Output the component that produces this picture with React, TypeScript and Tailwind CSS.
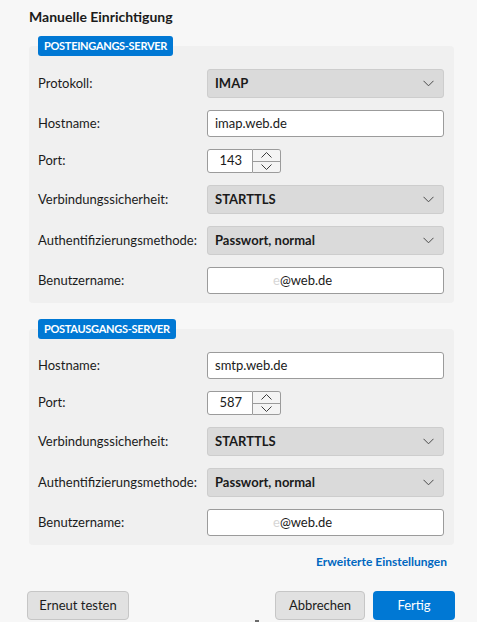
import React from "react";

const font = "font-['Lato','Open_Sans',sans-serif]";

function Chevron() {
  return (
    <svg width="11" height="7" viewBox="0 0 11 7" fill="none">
      <path d="M0.5 0.8 L5.5 5.8 L10.5 0.8" stroke="#4a4a4a" strokeWidth="1" />
    </svg>
  );
}

function Select({ value }: { value: string }) {
  return (
    <div className="h-[29px] w-[237px] flex items-center justify-between pl-[7px] pr-[9px] bg-[#dadada] border border-[#cdcdcd] rounded-[3px] text-[13px] font-bold text-[#1a1a1a]">
      <span>{value}</span>
      <Chevron />
    </div>
  );
}

function TextInput({ children }: { children: React.ReactNode }) {
  return (
    <div className="h-[27px] w-[237px] flex items-center pl-[7px] bg-white border border-[#9b9b9b] rounded-[3px] text-[13px] text-[#1a1a1a]">
      {children}
    </div>
  );
}

function Spinner({ value }: { value: string }) {
  return (
    <div className="flex h-[24px]">
      <div className="w-[46px] h-full flex items-center justify-end pr-[10px] bg-white border border-[#9b9b9b] rounded-l-[3px] text-[13px] text-[#1a1a1a]">
        {value}
      </div>
      <div className="w-[28px] h-full flex flex-col border border-l-0 border-[#9b9b9b] rounded-r-[3px] overflow-hidden">
        <div className="flex-1 flex items-center justify-center bg-[#f4f4f4] border-b border-[#9b9b9b]">
          <svg width="11" height="6" viewBox="0 0 11 6" fill="none">
            <path d="M0.5 5.5 L5.5 0.5 L10.5 5.5" stroke="#3c3c3c" strokeWidth="1" />
          </svg>
        </div>
        <div className="flex-1 flex items-center justify-center bg-[#f4f4f4]">
          <svg width="11" height="6" viewBox="0 0 11 6" fill="none">
            <path d="M0.5 0.5 L5.5 5.5 L10.5 0.5" stroke="#3c3c3c" strokeWidth="1" />
          </svg>
        </div>
      </div>
    </div>
  );
}

function Row({ label, children }: { label: string; children: React.ReactNode }) {
  return (
    <div className="flex items-center">
      <div className="w-[169px] text-[13px] text-[#1b1b1b]">{label}</div>
      {children}
    </div>
  );
}

function Badge({ text }: { text: string }) {
  return (
    <div className="relative z-10 ml-[9px] -mb-[10px] self-start h-[20px] flex items-center px-[6px] rounded-[3px] bg-[#0078d4] text-white text-[11px] font-bold tracking-[-0.3px]">
      {text}
    </div>
  );
}

function User() {
  return (
    <TextInput>
      <span className="pl-[58px] text-[#d6d6d6]">e</span>
      <span>@web.de</span>
    </TextInput>
  );
}

export default function App() {
  return (
    <div className={`${font} relative w-[477px] h-[622px] overflow-hidden bg-[#f7f7f7] text-[#1b1b1b]`}>
      <div className="pl-[29px] pt-[7px] text-[14px] font-bold leading-[19px]">Manuelle Einrichtigung</div>

      <div className="ml-[29px] mr-[23px] mt-[10px] flex flex-col">
        <Badge text="POSTEINGANGS-SERVER" />
        <div className="bg-[#f0f0f0] rounded-[4px] pl-[9px] pt-[23px] pb-[9px] flex flex-col gap-[12px]">
          <Row label="Protokoll:"><Select value="IMAP" /></Row>
          <Row label="Hostname:"><TextInput>imap.web.de</TextInput></Row>
          <Row label="Port:"><Spinner value="143" /></Row>
          <Row label="Verbindungssicherheit:"><Select value="STARTTLS" /></Row>
          <Row label="Authentifizierungsmethode:"><Select value="Passwort, normal" /></Row>
          <Row label="Benutzername:"><User /></Row>
        </div>

        <div className="mt-[16px]" />
        <Badge text="POSTAUSGANGS-SERVER" />
        <div className="bg-[#f0f0f0] rounded-[4px] pl-[9px] pt-[23px] pb-[9px] flex flex-col gap-[12px]">
          <Row label="Hostname:"><TextInput>smtp.web.de</TextInput></Row>
          <Row label="Port:"><Spinner value="587" /></Row>
          <Row label="Verbindungssicherheit:"><Select value="STARTTLS" /></Row>
          <Row label="Authentifizierungsmethode:"><Select value="Passwort, normal" /></Row>
          <Row label="Benutzername:"><User /></Row>
        </div>
      </div>

      <div className="flex justify-end pr-[30px] mt-[8px]">
        <span className="text-[12px] font-bold text-[#0067c0]">Erweiterte Einstellungen</span>
      </div>

      <div className="flex items-center mt-[20px] pl-[27px] pr-[22px]">
        <button className="h-[29px] w-[102px] rounded-[4px] bg-[#e1e1e1] border border-[#c6c6c6] text-[13px] text-[#1b1b1b]">
          Erneut testen
        </button>
        <div className="flex-1" />
        <button className="h-[29px] w-[90px] rounded-[4px] bg-[#e1e1e1] border border-[#c6c6c6] text-[13px] text-[#1b1b1b]">
          Abbrechen
        </button>
        <button className="ml-[8px] h-[29px] w-[82px] rounded-[4px] bg-[#0078d4] text-[13px] text-white">
          Fertig
        </button>
      </div>

      <div className="absolute left-[255px] top-[620px] w-[4px] h-[2px] bg-[#6b6b6b]" />
    </div>
  );
}
